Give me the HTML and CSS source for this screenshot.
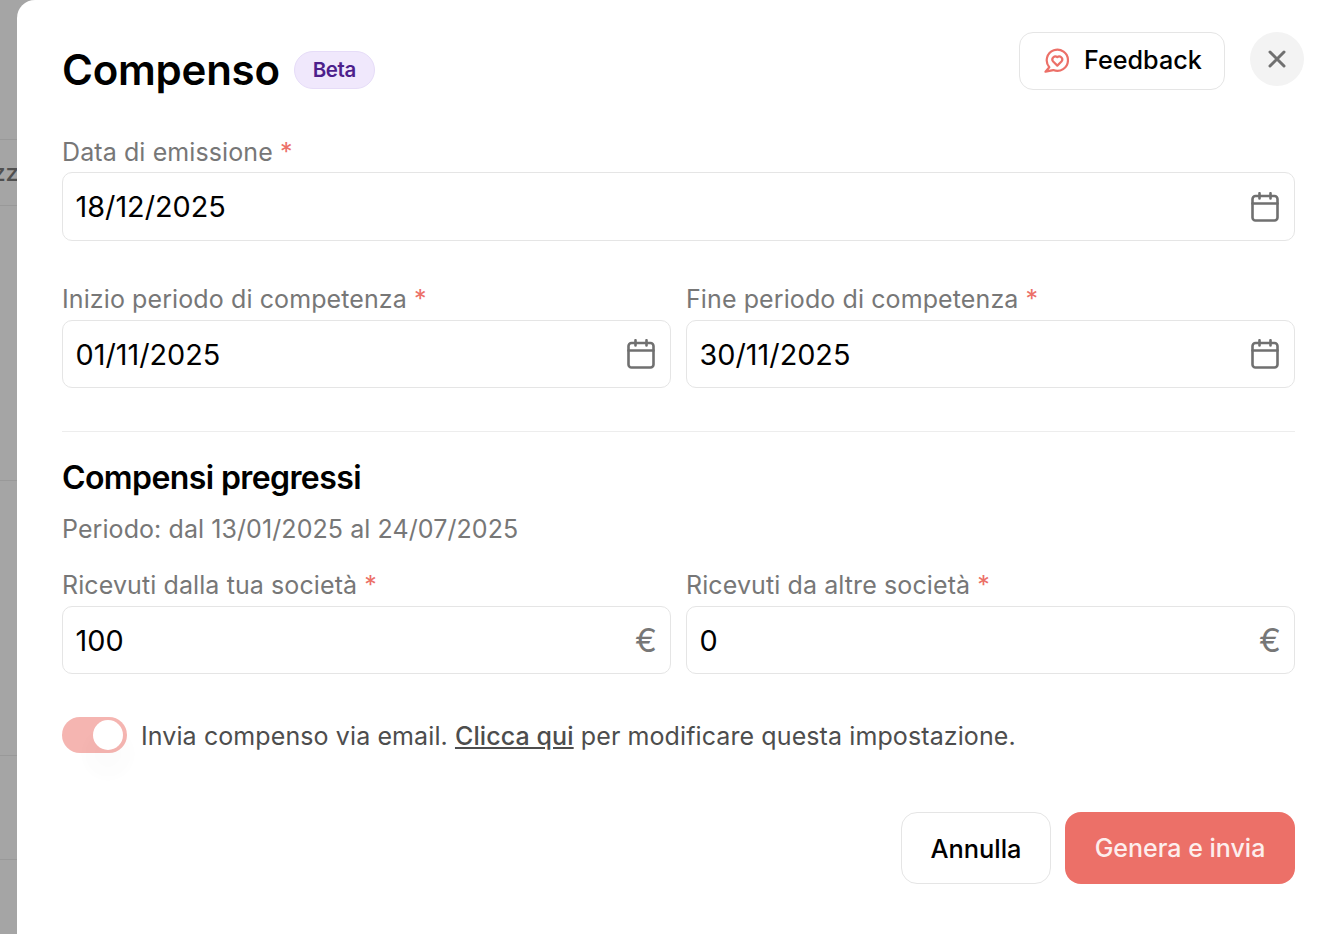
FILE: index.html
```html
<!DOCTYPE html>
<html lang="it">
<head>
  <meta charset="UTF-8">
  <meta name="viewport" content="width=device-width, initial-scale=1.0">
  <title>Compenso</title>
  <link rel="stylesheet" href="styles.css">
</head>
<body>
  <div class="backdrop">
    <div class="back-row row-a"></div>
    <div class="back-row row-b"><span>zz</span></div>
    <div class="back-row row-c"></div>
    <div class="back-row row-c"></div>
    <div class="back-row row-d"></div>
  </div>

  <div class="modal">
    <div class="modal-header">
      <div class="title-wrap">
        <h1 class="title">Compenso</h1>
        <span class="badge">Beta</span>
      </div>
      <div class="header-actions">
        <button class="feedback">
          <svg class="feedback-icon" viewBox="0 0 25 25" fill="none" stroke="#ec7068" stroke-width="2.2" stroke-linejoin="round" stroke-linecap="round">
            <path d="M5.3 19.2A10.6 10.6 0 1 1 9.3 22.1L1.5 23.7Z"/>
            <path d="M13.3 17.6 8.9 13.2a3 3 0 0 1 4.4-4 3 3 0 0 1 4.4 4Z"/>
          </svg>
          Feedback
        </button>
        <button class="close">
          <svg viewBox="0 0 18 18" fill="none" stroke="#707070" stroke-width="3" stroke-linecap="round">
            <path d="M2 2 16 16M16 2 2 16"/>
          </svg>
        </button>
      </div>
    </div>

    <div class="field first-field">
      <label class="label">Data di emissione <span class="req">*</span></label>
      <div class="input">
        <span>18/12/2025</span>
        <svg class="cal" viewBox="0 0 28 30" fill="none" stroke="#707070" stroke-width="2.6" stroke-linecap="round" stroke-linejoin="round">
          <rect x="1.5" y="4" width="25" height="24.5" rx="3"/>
          <path d="M1.5 11.5H26.5M8.5 1.2V6.5M19.5 1.2V6.5"/>
        </svg>
      </div>
    </div>

    <div class="two-cols period">
      <div class="field">
        <label class="label">Inizio periodo di competenza <span class="req">*</span></label>
        <div class="input">
          <span>01/11/2025</span>
          <svg class="cal" viewBox="0 0 28 30" fill="none" stroke="#707070" stroke-width="2.6" stroke-linecap="round" stroke-linejoin="round">
            <rect x="1.5" y="4" width="25" height="24.5" rx="3"/>
            <path d="M1.5 11.5H26.5M8.5 1.2V6.5M19.5 1.2V6.5"/>
          </svg>
        </div>
      </div>
      <div class="field">
        <label class="label">Fine periodo di competenza <span class="req">*</span></label>
        <div class="input">
          <span>30/11/2025</span>
          <svg class="cal" viewBox="0 0 28 30" fill="none" stroke="#707070" stroke-width="2.6" stroke-linecap="round" stroke-linejoin="round">
            <rect x="1.5" y="4" width="25" height="24.5" rx="3"/>
            <path d="M1.5 11.5H26.5M8.5 1.2V6.5M19.5 1.2V6.5"/>
          </svg>
        </div>
      </div>
    </div>

    <hr class="divider">

    <h2 class="section-title">Compensi pregressi</h2>
    <p class="section-sub">Periodo: dal 13/01/2025 al 24/07/2025</p>

    <div class="two-cols">
      <div class="field">
        <label class="label">Ricevuti dalla tua società <span class="req">*</span></label>
        <div class="input">
          <span>100</span>
          <span class="unit">€</span>
        </div>
      </div>
      <div class="field">
        <label class="label">Ricevuti da altre società <span class="req">*</span></label>
        <div class="input">
          <span>0</span>
          <span class="unit">€</span>
        </div>
      </div>
    </div>

    <div class="email-row">
      <div class="toggle"><div class="knob"></div></div>
      <span>Invia compenso via email. <a class="link" href="#">Clicca qui</a> per modificare questa impostazione.</span>
    </div>

    <div class="actions">
      <button class="btn btn-cancel">Annulla</button>
      <button class="btn btn-primary">Genera e invia</button>
    </div>
  </div>
</body>
</html>
```

FILE: styles.css
```css
* {
  box-sizing: border-box;
}
html, body {
  height: 100%;
}
body {
  margin: 0;
  display: flex;
  height: 934px;
  overflow: hidden;
  background-color: #a5a5a5;
  font-family: Inter, "Liberation Sans", sans-serif;
  color: #000;
}
.backdrop {
  width: 17px;
  flex-shrink: 0;
  overflow: hidden;
}
.back-row {
  display: flex;
  justify-content: flex-end;
  align-items: center;
  border-bottom: 1px solid #999;
  color: #505050;
  font-size: 24px;
  font-weight: 500;
}
.back-row span {
  margin-right: -2px;
  white-space: nowrap;
}
.row-a {
  height: 140px;
}
.row-b {
  height: 66px;
}
.row-c {
  height: 275px;
}
.row-d {
  height: 104px;
}
.modal {
  flex: 1;
  background-color: #fff;
  border-top-left-radius: 18px;
  padding: 32px 45px 0;
}
.modal-header {
  display: flex;
  justify-content: space-between;
  align-items: flex-start;
  height: 102px;
}
.title-wrap {
  display: flex;
  align-items: center;
  gap: 14px;
  height: 76px;
}
.title {
  margin: 0;
  padding-bottom: 2px;
  font-size: 42px;
  font-weight: 600;
  letter-spacing: -0.25px;
}
.badge {
  height: 38px;
  padding: 0 18px 2px;
  display: flex;
  align-items: center;
  border: 1px solid #e6dcf8;
  border-radius: 19px;
  background-color: #f0e8fc;
  color: #4d1f8c;
  font-size: 20.5px;
  font-weight: 600;
  letter-spacing: -0.4px;
}
.header-actions {
  display: flex;
  gap: 25px;
  margin-right: -9px;
}
.feedback {
  display: flex;
  align-items: center;
  gap: 15px;
  width: 206px;
  height: 58px;
  padding: 0 0 2px 24px;
  background-color: #fff;
  border: 1px solid #e5e5e5;
  border-radius: 14px;
  font-family: inherit;
  font-size: 25.2px;
  font-weight: 500;
  color: #000;
}
.feedback-icon {
  width: 25px;
  height: 25px;
}
.close {
  display: flex;
  align-items: center;
  justify-content: center;
  width: 54px;
  height: 54px;
  padding: 0;
  border: none;
  border-radius: 50%;
  background-color: #f3f3f3;
}
.close svg {
  width: 18px;
  height: 18px;
}
.label {
  display: block;
  height: 38px;
  padding-top: 2px;
  font-size: 25px;
  letter-spacing: 0.1px;
  color: #777;
}
.first-field .label {
  padding-top: 3px;
}
.req {
  color: #ec7068;
}
.input {
  display: flex;
  justify-content: space-between;
  align-items: center;
  height: 68px;
  padding: 0 15px 0 12.5px;
  border: 1px solid #e5e5e5;
  border-radius: 10px;
  font-size: 28.8px;
}
.first-field .input {
  height: 69px;
}
.cal {
  width: 28px;
  height: 30px;
}
.unit {
  margin-right: -2px;
  font-size: 33px;
  color: #777;
}
.two-cols {
  display: grid;
  grid-template-columns: 1fr 1fr;
  gap: 15px;
}
.period {
  margin-top: 41px;
}
.divider {
  margin: 43px 0 0;
  border: none;
  border-top: 1px solid #ededed;
}
.section-title {
  margin: 26px 0 0;
  font-size: 32px;
  font-weight: 600;
  letter-spacing: -0.6px;
}
.section-sub {
  margin: 17px 0 24px;
  font-size: 25px;
  letter-spacing: 0.08px;
  color: #777;
}
.email-row {
  display: flex;
  align-items: center;
  gap: 14px;
  margin-top: 43px;
  font-size: 25px;
  letter-spacing: 0.1px;
  color: #4d4d4d;
}
.email-row span {
  padding-top: 2px;
}
.link {
  color: #4d4d4d;
  font-weight: 500;
}
.toggle {
  display: flex;
  justify-content: flex-end;
  align-items: center;
  width: 65px;
  height: 36px;
  padding-right: 4px;
  border-radius: 18px;
  background-color: #f5b5b1;
}
.knob {
  width: 30px;
  height: 30px;
  border-radius: 50%;
  background-color: #fff;
  box-shadow: 0 19px 10px 10px rgba(0, 0, 0, 0.012);
}
.actions {
  display: flex;
  justify-content: flex-end;
  gap: 14px;
  margin-top: 59px;
}
.btn {
  height: 72px;
  border-radius: 16px;
  font-family: inherit;
  font-size: 25.4px;
  font-weight: 500;
}
.btn-cancel {
  width: 150px;
  background-color: #fff;
  border: 1px solid #e5e5e5;
  color: #000;
}
.btn-primary {
  width: 230px;
  background-color: #ec7068;
  border: none;
  color: #fdeeed;
  font-size: 25px;
}
```
